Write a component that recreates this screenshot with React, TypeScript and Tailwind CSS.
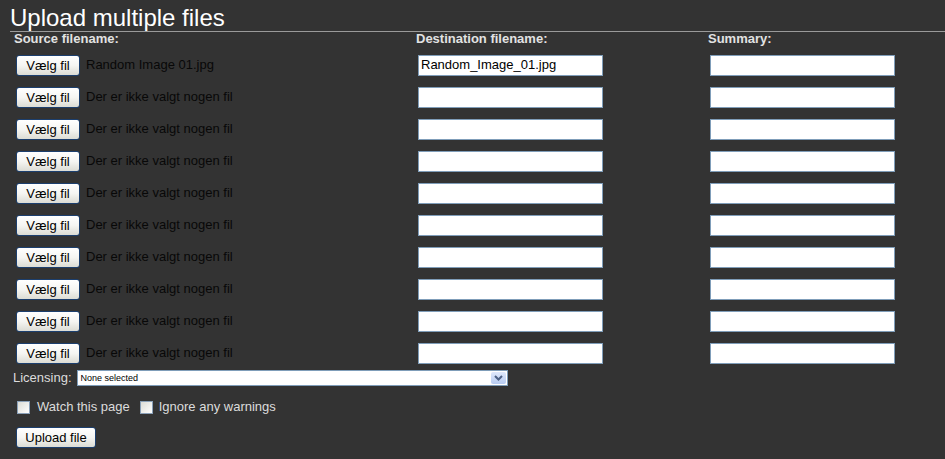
const rows = [
  { file: 'Random Image 01.jpg', dest: 'Random_Image_01.jpg' },
  ...Array.from({ length: 9 }, () => ({ file: 'Der er ikke valgt nogen fil', dest: '' })),
];

const font = { fontFamily: '"Liberation Sans", Arial, sans-serif' };

function XpButton({ label, width }: { label: string; width: string }) {
  return (
    <button
      type="button"
      className={`${width} h-[21px] shrink-0 rounded-[3px] border border-[#1c3f6e] bg-gradient-to-b from-white via-[#f5f5f2] to-[#dcdcd4] text-[13px] leading-none text-black`}
      style={font}
    >
      {label}
    </button>
  );
}

function XpInput({ value }: { value: string }) {
  return (
    <div className="ml-[2px] flex h-[21px] w-[185px] items-center border border-[#7f9db9] bg-white pl-[2px] text-[13px] text-black">
      {value}
    </div>
  );
}

function XpCheck() {
  return (
    <div className="h-[13px] w-[13px] shrink-0 border border-[#8aa0b8] bg-gradient-to-br from-[#dcdcd6] to-white" />
  );
}

export default function App() {
  return (
    <div className="h-[459px] w-[945px] overflow-hidden bg-[#333333]" style={font}>
      <div className="ml-[10px] h-[32px] border-b border-[#9a9a9a] pt-[5px] text-[24px] leading-[26px] text-white">
        Upload multiple files
      </div>

      <div className="grid grid-cols-[402px_292px_1fr] pl-[14px]">
        <div className="h-[17px] text-[13px] font-bold leading-[13px] text-[#e2e2e2]">Source filename:</div>
        <div className="h-[17px] text-[13px] font-bold leading-[13px] text-[#e2e2e2]">Destination filename:</div>
        <div className="h-[17px] text-[13px] font-bold leading-[13px] text-[#e2e2e2]">Summary:</div>

        {rows.map((row, idx) => (
          <div key={idx} className="contents">
            <div className="flex h-[32px] items-center pl-[2px]">
              <XpButton label="Vælg fil" width="w-[64px]" />
              <span className="ml-[6px] text-[13px] text-[#080808]">{row.file}</span>
            </div>
            <div className="flex h-[32px] items-center">
              <XpInput value={row.dest} />
            </div>
            <div className="flex h-[32px] items-center">
              <XpInput value="" />
            </div>
          </div>
        ))}
      </div>

      <div className="flex h-[18px] items-center pl-[13px]">
        <span className="text-[13px] text-[#dcdcdc]">Licensing:</span>
        <div className="ml-[5px] flex h-[16px] w-[431px] items-center justify-between border border-[#7f9db9] bg-white pl-[3px] pr-[1px]">
          <span className="text-[9px] leading-none text-black">None selected</span>
          <div className="flex h-[12px] w-[15px] items-center justify-center rounded-[2px] bg-gradient-to-b from-[#dfe8fb] to-[#b8ccf2]">
            <svg width="9" height="6" viewBox="0 0 9 6">
              <path d="M1 1 L4.5 4.5 L8 1" fill="none" stroke="#4d6185" strokeWidth="2" />
            </svg>
          </div>
        </div>
      </div>

      <div className="flex h-[40px] items-center pl-[17px] text-[13px] text-[#dcdcdc]">
        <XpCheck />
        <span className="ml-[7px]">Watch this page</span>
        <span className="ml-[10px]">
          <XpCheck />
        </span>
        <span className="ml-[6px]">Ignore any warnings</span>
      </div>

      <div className="flex pl-[16px]">
        <XpButton label="Upload file" width="w-[80px]" />
      </div>
    </div>
  );
}
